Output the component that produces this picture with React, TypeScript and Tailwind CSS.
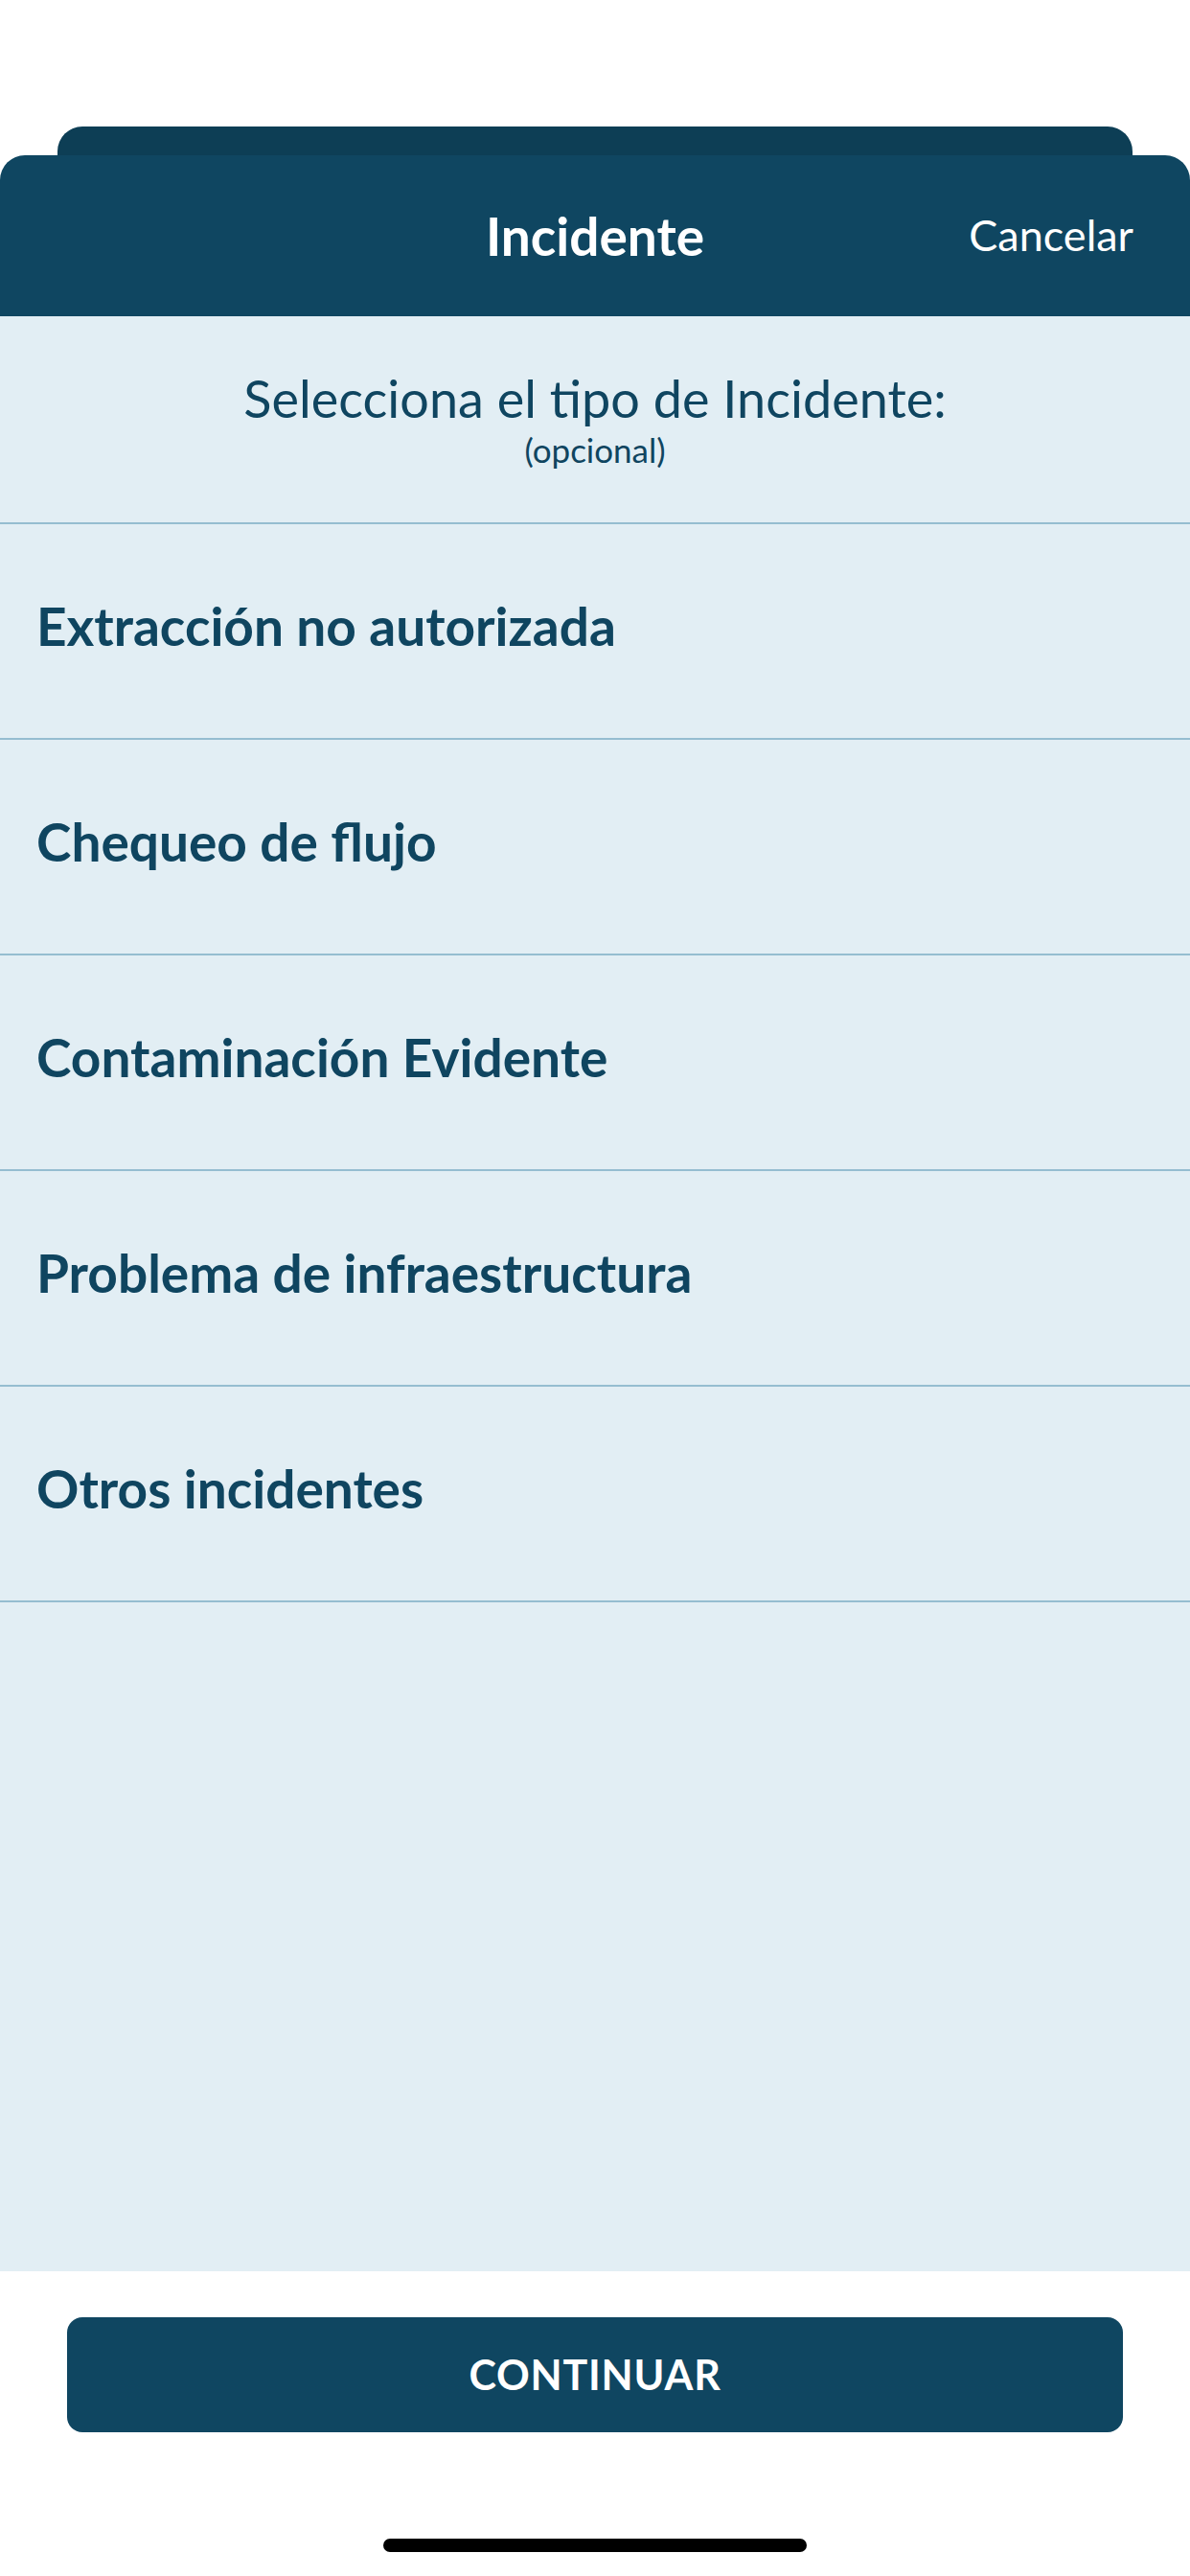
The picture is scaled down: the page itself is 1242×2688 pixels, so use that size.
import React from "react";

const incidentTypes: string[] = [
  "Extracción no autorizada",
  "Chequeo de flujo",
  "Contaminación Evidente",
  "Problema de infraestructura",
  "Otros incidentes",
];

const App: React.FC = () => {
  return (
    <div
      className="flex min-h-[2688px] w-[1242px] flex-col bg-white"
      style={{ fontFamily: "Lato, 'Noto Sans', sans-serif" }}
    >
      {/* status bar area */}
      <div className="h-[132px]" />

      {/* stacked sheet tab */}
      <div className="mx-[60px] h-[30px] rounded-t-[26px] bg-[#0d3e55]" />

      {/* header */}
      <div className="relative flex h-[168px] items-center justify-center rounded-t-[26px] bg-[#0f4661]">
        <h1 className="text-[55px] font-bold text-white">Incidente</h1>
        <button className="absolute right-[59px] top-1/2 -translate-y-1/2 text-[45px] font-normal text-white">
          Cancelar
        </button>
      </div>

      {/* body */}
      <div className="flex flex-1 flex-col bg-[#e2eef4]">
        <div className="flex h-[217px] flex-col items-center border-b-2 border-[#95bdd0] pt-[59px] text-[#0f4560]">
          <p className="text-[54px] leading-none">Selecciona el tipo de Incidente:</p>
          <p className="mt-[9px] text-[35px] leading-none">(opcional)</p>
        </div>

        {incidentTypes.map((item) => (
          <div
            key={item}
            className="flex h-[225px] items-center border-b-2 border-[#95bdd0] pb-[10px] pl-[38px]"
          >
            <span className="text-[55px] font-bold text-[#0f4560]">{item}</span>
          </div>
        ))}
      </div>

      {/* footer */}
      <div className="flex h-[318px] flex-col items-center bg-white">
        <button className="mt-[48px] flex h-[120px] w-[1102px] items-center justify-center rounded-[16px] bg-[#0f4661] text-[43px] font-bold tracking-[0.8px] text-white">
          CONTINUAR
        </button>
        <div className="mt-[111px] h-[14px] w-[442px] rounded-full bg-black" />
      </div>
    </div>
  );
};

export default App;
